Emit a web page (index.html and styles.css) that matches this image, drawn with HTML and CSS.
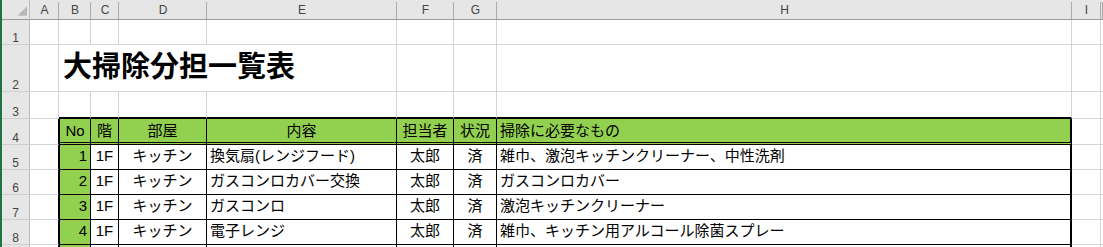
FILE: index.html
```html
<!DOCTYPE html>
<html lang="ja">
<head>
<meta charset="utf-8">
<title>大掃除分担一覧表</title>
<link rel="stylesheet" href="styles.css">
</head>
<body>
<div class="sheet">
  <div class="row hdr">
    <div class="corner"><svg width="28" height="19" viewBox="0 0 28 19"><polygon points="16,16 26,16 26,6" fill="#b8b8b8"/></svg></div>
    <div class="ch">A</div><div class="ch">B</div><div class="ch">C</div><div class="ch">D</div><div class="ch">E</div><div class="ch">F</div><div class="ch">G</div><div class="ch">H</div><div class="ch">I</div><div class="ch"></div>
  </div>
  <div class="row r1">
    <div class="rh">1</div><div class="c"></div><div class="c"></div><div class="c"></div><div class="c"></div><div class="c"></div><div class="c"></div><div class="c"></div><div class="c"></div><div class="c"></div><div class="c"></div>
  </div>
  <div class="row r2">
    <div class="rh">2</div><div class="c"></div><div class="c title">大掃除分担一覧表</div><div class="c"></div><div class="c"></div><div class="c"></div><div class="c"></div><div class="c"></div>
  </div>
  <div class="row r3">
    <div class="rh">3</div><div class="c"></div><div class="c top"></div><div class="c top"></div><div class="c top"></div><div class="c top"></div><div class="c top"></div><div class="c top"></div><div class="c top"></div><div class="c"></div><div class="c"></div>
  </div>
  <div class="row r4">
    <div class="rh">4</div><div class="c edge"></div>
    <div class="c t th first">No</div><div class="c t th">階</div><div class="c t th">部屋</div><div class="c t th">内容</div><div class="c t th">担当者</div><div class="c t th">状況</div><div class="c t th left last">掃除に必要なもの</div>
    <div class="c"></div><div class="c"></div>
  </div>
  <div class="row rd">
    <div class="rh">5</div><div class="c edge"></div>
    <div class="c t no first">1</div><div class="c t ctr">1F</div><div class="c t ctr">キッチン</div><div class="c t">換気扇(レンジフード)</div><div class="c t ctr">太郎</div><div class="c t ctr">済</div><div class="c t last">雑巾、激泡キッチンクリーナー、中性洗剤</div>
    <div class="c"></div><div class="c"></div>
  </div>
  <div class="row rd">
    <div class="rh">6</div><div class="c edge"></div>
    <div class="c t no first">2</div><div class="c t ctr">1F</div><div class="c t ctr">キッチン</div><div class="c t">ガスコンロカバー交換</div><div class="c t ctr">太郎</div><div class="c t ctr">済</div><div class="c t last">ガスコンロカバー</div>
    <div class="c"></div><div class="c"></div>
  </div>
  <div class="row rd">
    <div class="rh">7</div><div class="c edge"></div>
    <div class="c t no first">3</div><div class="c t ctr">1F</div><div class="c t ctr">キッチン</div><div class="c t">ガスコンロ</div><div class="c t ctr">太郎</div><div class="c t ctr">済</div><div class="c t last">激泡キッチンクリーナー</div>
    <div class="c"></div><div class="c"></div>
  </div>
  <div class="row rd">
    <div class="rh">8</div><div class="c edge"></div>
    <div class="c t no first">4</div><div class="c t ctr">1F</div><div class="c t ctr">キッチン</div><div class="c t">電子レンジ</div><div class="c t ctr">太郎</div><div class="c t ctr">済</div><div class="c t last">雑巾、キッチン用アルコール除菌スプレー</div>
    <div class="c"></div><div class="c"></div>
  </div>
  <div class="row rd">
    <div class="rh"></div><div class="c edge"></div>
    <div class="c t no first"></div><div class="c t"></div><div class="c t"></div><div class="c t"></div><div class="c t"></div><div class="c t"></div><div class="c t last"></div>
    <div class="c"></div><div class="c"></div>
  </div>
</div>
</body>
</html>
```

FILE: styles.css
```css
html, body {
  margin: 0;
  padding: 0;
  background: #ffffff;
}

body {
  width: 1103px;
  height: 247px;
  overflow: hidden;
  font-family: "Liberation Sans", "Noto Sans CJK JP", sans-serif;
  color: #000;
}

.sheet {
  width: 1103px;
  height: 247px;
  overflow: hidden;
  border-left: 2px solid #217346;
  box-sizing: border-box;
}

.row {
  display: grid;
  grid-template-columns: 28px 29px 32px 28px 88px 190px 57px 43px 575px 29px 1fr;
}

.hdr { height: 20px; }
.r1 { height: 25px; }
.r2 { height: 47px; }
.r3 { height: 27px; }
.r4 { height: 26px; }
.rd { height: 25px; }

/* column header */
.corner {
  background: #e6e6e6;
  border-right: 1px solid #bdbdbd;
  border-bottom: 1px solid #9b9b9b;
  box-sizing: border-box;
  display: flex;
}

.ch {
  box-sizing: border-box;
  background: linear-gradient(#ababab, #ababab) right bottom / 1px calc(100% - 2px) no-repeat, #e6e6e6;
  border-bottom: 1px solid #9b9b9b;
  display: flex;
  align-items: center;
  justify-content: center;
  font-size: 12px;
  color: #444;
  padding-top: 1px;
}

/* row header */
.rh {
  box-sizing: border-box;
  background: #e6e6e6;
  border-right: 1px solid #bdbdbd;
  border-bottom: 1px solid #cfcfcf;
  display: flex;
  align-items: flex-end;
  justify-content: center;
  font-size: 12px;
  line-height: 1;
  color: #444;
}

/* cells */
.c {
  box-sizing: border-box;
  border-right: 1px solid #d4d4d4;
  border-bottom: 1px solid #d4d4d4;
  display: flex;
  align-items: center;
  padding: 0 3px 2px;
  white-space: nowrap;
  overflow: hidden;
  font-size: 15px;
  line-height: 20px;
}

.title {
  grid-column: span 4;
  align-items: flex-end;
  padding: 0 3px 12px 4px;
  font-family: "Noto Sans CJK JP", sans-serif;
  font-weight: bold;
  font-size: 29px;
  line-height: 1;
  overflow: visible;
}

.top {
  border-bottom: 2px solid #000;
}

.edge {
  border-right-color: #000;
}

.t {
  border-right-color: #000;
  border-bottom-color: #000;
}

.first {
  border-left: 1px solid #000;
}

.last {
  border-right-width: 2px;
}

.th {
  background: #92d050;
  justify-content: center;
  border-bottom: 3px double #000;
  padding: 0 2px;
}

.th.left {
  justify-content: flex-start;
  padding-left: 3px;
}

.no {
  background: #92d050;
  justify-content: flex-end;
}

.ctr {
  justify-content: center;
}
```
